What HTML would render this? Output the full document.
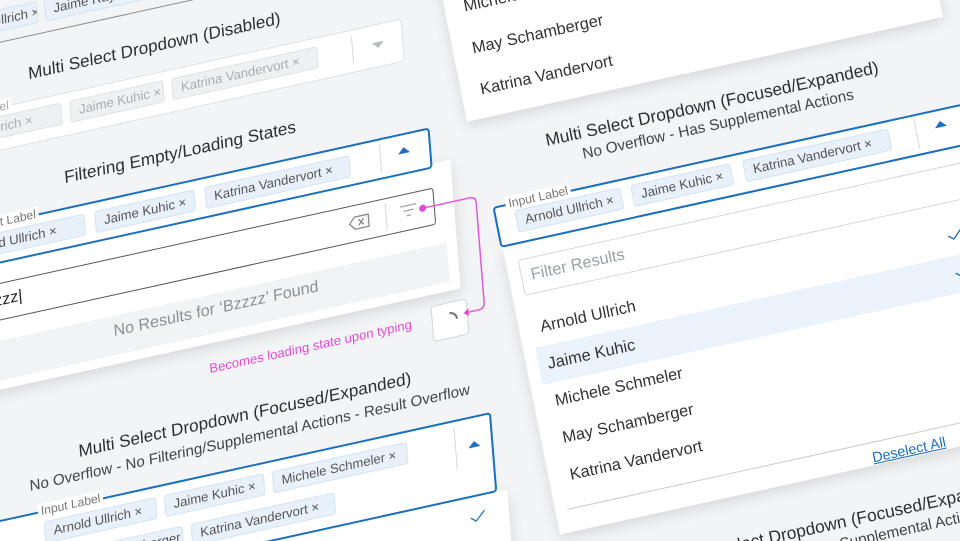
<!DOCTYPE html>
<html><head><meta charset="utf-8"><style>
*{box-sizing:border-box;margin:0;padding:0}
html,body{width:960px;height:541px;overflow:hidden;background:#f3f4f6;font-family:"Liberation Sans",sans-serif;color:#333}
#wrap{position:relative;width:960px;height:541px;overflow:hidden;clip-path:inset(0)}
.g{position:absolute;left:0;top:0;width:1px;height:1px;transform-origin:0 0}
.L{transform:matrix(1,-0.22,0.08,1,0,0)}
.R{transform:matrix(1,-0.22,0.2,1,0,0)}
.a{position:absolute;white-space:nowrap}
.h{font-size:17px;line-height:20px;text-align:center;color:#2b2f33}
.s{font-size:15px;line-height:18px;text-align:center;color:#444}
.chip{position:absolute;height:22px;background:#e8f1fa;border:1px solid #d3e3f3;border-radius:3px;font-size:13px;line-height:20px;color:#555;padding-left:8px;white-space:nowrap;overflow:hidden}
.chip.d{background:#eef0f2;border-color:#e0e2e5;color:#a9adb2}
.box{position:absolute;border-radius:4px;background:#fff}
.bl{border:2px solid #1b6fc2}
.lab{position:absolute;font-size:12px;line-height:14px;color:#777;background:#fff;padding:0 3px;white-space:nowrap}
.card{position:absolute;background:#fff;box-shadow:0 4px 14px rgba(0,0,0,.12)}
.sep{position:absolute;width:1px;background:#d5d8dc}
.up{position:absolute;width:0;height:0;border-left:6px solid transparent;border-right:6px solid transparent;border-bottom:6px solid #1b6fc2}
.it{position:absolute;font-size:16px;line-height:20px;color:#333;white-space:nowrap}
</style></head><body><div id="wrap">

<div class="g L">
  <div class="box" style="left:-150px;top:-40px;width:560px;height:82px;background:transparent;border:1px solid #8a8f96"></div>
  <div class="chip" style="left:-60px;top:9px;width:96px">Arnold Ullrich ×</div>
  <div class="chip" style="left:43px;top:9px;width:107px">Jaime Raynor ×</div>

  <div class="a h" style="left:0;top:69px;width:296px">Multi Select Dropdown (Disabled)</div>
  <div class="box" style="left:-150px;top:105px;width:543px;height:43px;border:1px solid #dfe1e4"></div>
  <div class="lab" style="left:-62px;top:98px;color:#aaa">Input Label</div>
  <div class="chip d" style="left:-75px;top:114px;width:127px">Arnold Ullrich ×</div>
  <div class="chip d" style="left:60px;top:114px;width:94px">Jaime Kuhic ×</div>
  <div class="chip d" style="left:162px;top:114px;width:146px">Katrina Vandervort ×</div>
  <div class="sep" style="left:342px;top:112px;height:27px"></div>
  <div class="a" style="left:362px;top:123px;border-left:6px solid transparent;border-right:6px solid transparent;border-top:6px solid #b9bdc2"></div>

  <div class="a h" style="left:0;top:179px;width:330px">Filtering Empty/Loading States</div>
  <div class="card" style="left:-150px;top:254px;width:580px;height:129px"></div>
  <div class="box bl" style="left:-150px;top:218px;width:562px;height:41px"></div>
  <div class="lab" style="left:-44px;top:211px">Input Label</div>
  <div class="chip" style="left:-60px;top:228px;width:126px">Arnold Ullrich ×</div>
  <div class="chip" style="left:76px;top:228px;width:100px">Jaime Kuhic ×</div>
  <div class="chip" style="left:186px;top:228px;width:145px">Katrina Vandervort ×</div>
  <div class="sep" style="left:361px;top:224px;height:27px"></div>
  <div class="up" style="left:379px;top:232px"></div>

  <div class="box" style="left:-130px;top:278px;width:541px;height:37px;border:1px solid #555;border-radius:3px"></div>
  <div class="it" style="left:-48px;top:286px;color:#222">Bzzzz<span style="font-weight:300">|</span></div>
  <svg class="a" style="left:324px;top:288px" width="24" height="16" viewBox="0 0 24 16"><path d="M7 2H21V14H7L2 8Z" fill="none" stroke="#888" stroke-width="1.3"/><path d="M11 5L16 11M16 5L11 11" stroke="#888" stroke-width="1.3"/></svg>
  <div class="sep" style="left:362px;top:283px;height:27px"></div>
  <svg class="a" style="left:376px;top:288px" width="18" height="14"><path d="M1 2H17M4 7H14M7 12H11" stroke="#aaa" stroke-width="1.4"/></svg>
  <div class="box" style="left:-130px;top:335px;width:550px;height:39px;background:#f2f3f5;border-radius:0"></div>
  <div class="it" style="left:48px;top:341px;width:280px;text-align:center;color:#8b9097">No Results for ‘Bzzzz’ Found</div>
  <div class="box" style="left:399px;top:394px;width:36px;height:36px;border:1px solid #d2d5d9"></div>
  <svg class="a" style="left:405px;top:400px" width="24" height="24"><path d="M12 5A7 7 0 0 1 19 12" fill="none" stroke="#777" stroke-width="2"/></svg>
  <div class="a" style="left:128px;top:400px;width:300px;text-align:center;font-size:13px;color:#e24bd6">Becomes loading state upon typing</div>
  <svg class="a" style="left:0;top:0;overflow:visible" width="1" height="1"><path d="M399 296H446Q452 296 452 302V402Q452 408 446 408H436" fill="none" stroke="#e45bd8" stroke-width="1.5"/><circle cx="399" cy="296" r="3.5" fill="#e24bd6"/><path d="M436 404L431 408L436 412Z" fill="#e24bd6"/></svg>

  <div class="a h" style="left:0;top:451px;width:416px">Multi Select Dropdown (Focused/Expanded)</div>
  <div class="a s" style="left:-40px;top:476px;width:502px">No Overflow - No Filtering/Supplemental Actions - Result Overflow</div>
  <div class="card" style="left:-150px;top:591px;width:610px;height:120px"></div>
  <div class="box bl" style="left:-150px;top:511px;width:600px;height:80px"></div>
  <div class="lab" style="left:-3px;top:504px">Input Label</div>
  <div class="chip" style="left:2px;top:522px;width:112px">Arnold Ullrich ×</div>
  <div class="chip" style="left:122px;top:522px;width:100px">Jaime Kuhic ×</div>
  <div class="chip" style="left:230px;top:522px;width:135px">Michele Schmeler ×</div>
  <div class="chip" style="left:20px;top:556px;width:118px">May Schamberger ×</div>
  <div class="chip" style="left:146px;top:556px;width:144px">Katrina Vandervort ×</div>
  <div class="sep" style="left:412px;top:518px;height:42px"></div>
  <div class="up" style="left:425px;top:536px"></div>
  <svg class="a" style="left:421px;top:605px" width="16" height="12"><path d="M1 6L6 10L15 1" fill="none" stroke="#1b6fc2" stroke-width="1.3"/></svg>
</div>

<div class="g R">
  <div class="card" style="left:424px;top:-60px;width:476px;height:275px"></div>
  <div class="it" style="left:443px;top:95px">Michele Schmeler</div>
  <div class="it" style="left:443px;top:137px">May Schamberger</div>
  <div class="it" style="left:443px;top:178px">Katrina Vandervort</div>

  <div class="a h" style="left:470px;top:240px;width:384px">Multi Select Dropdown (Focused/Expanded)</div>
  <div class="a s" style="left:470px;top:262px;width:388px">No Overflow - Has Supplemental Actions</div>
  <div class="card" style="left:434px;top:343px;width:476px;height:287px"></div>
  <div class="box bl" style="left:432px;top:302px;width:470px;height:41px"></div>
  <div class="lab" style="left:445px;top:295px">Input Label</div>
  <div class="chip" style="left:452px;top:310px;width:106px">Arnold Ullrich ×</div>
  <div class="chip" style="left:568px;top:310px;width:100px">Jaime Kuhic ×</div>
  <div class="chip" style="left:680px;top:310px;width:146px">Katrina Vandervort ×</div>
  <div class="sep" style="left:852px;top:306px;height:30px"></div>
  <div class="up" style="left:871px;top:314px"></div>

  <div class="box" style="left:446px;top:358px;width:450px;height:36px;border:1px solid #d5d8dc;border-radius:3px"></div>
  <div class="it" style="left:456px;top:366px;color:#9aa0a6">Filter Results</div>
  <div class="box" style="left:446px;top:446px;width:460px;height:37px;background:#eaf2fb;border-radius:0"></div>
  <div class="it" style="left:455px;top:418px">Arnold Ullrich</div>
  <div class="it" style="left:455px;top:455px">Jaime Kuhic</div>
  <div class="it" style="left:455px;top:492px">Michele Schmeler</div>
  <div class="it" style="left:455px;top:529px">May Schamberger</div>
  <div class="it" style="left:455px;top:566px">Katrina Vandervort</div>
  <svg class="a" style="left:862px;top:420px" width="16" height="12"><path d="M1 6L6 10L15 1" fill="none" stroke="#1b6fc2" stroke-width="1.3"/></svg>
  <svg class="a" style="left:862px;top:457px" width="16" height="12"><path d="M1 6L6 10L15 1" fill="none" stroke="#1b6fc2" stroke-width="1.3"/></svg>
  <div class="a" style="left:446px;top:607px;width:460px;height:1px;background:#c8cbd0"></div>
  <div class="a" style="left:748px;top:614px;font-size:14px;color:#1b6fc2;text-decoration:underline">Deselect All</div>
  <div class="a h" style="left:515px;top:668px;width:384px">Multi Select Dropdown (Focused/Expanded)</div>
  <div class="a s" style="left:515px;top:690px;width:388px">No Overflow - Has Supplemental Actions</div>
</div>
</div></body></html>
